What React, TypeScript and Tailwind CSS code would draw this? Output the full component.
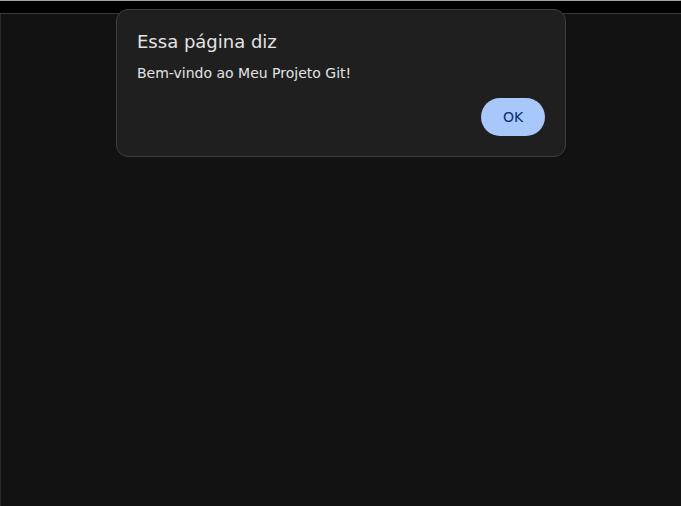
import React from 'react';

const App = () => {
  return (
    <div
      className="relative w-[681px] h-[506px] overflow-hidden bg-[#121212]"
      style={{ fontFamily: '"DejaVu Sans", "Liberation Sans", sans-serif' }}
    >
      <div className="h-[14px] bg-black border-t border-t-[#a3a3a3] border-b border-b-[#3a3a3a]" />
      <div className="h-[492px] border-l border-l-[#2a2a2a]" />

      <div className="absolute left-[116px] top-[9px] w-[450px] h-[148px] rounded-[12px] border border-[#3e3e3e] bg-[#1f1f1f] flex flex-col px-[20px] pt-[20px] pb-[20px]">
        <h1 className="text-[18px] leading-[24px] text-[#e3e3e3]">Essa página diz</h1>
        <p className="mt-[9px] text-[14px] leading-[20px] text-[#e3e3e3]">Bem-vindo ao Meu Projeto Git!</p>
        <div className="mt-auto flex justify-end">
          <button className="w-[64px] h-[38px] rounded-full bg-[#a8c7fa] text-[#062e6f] text-[14px]">
            OK
          </button>
        </div>
      </div>
    </div>
  );
};

export default App;
